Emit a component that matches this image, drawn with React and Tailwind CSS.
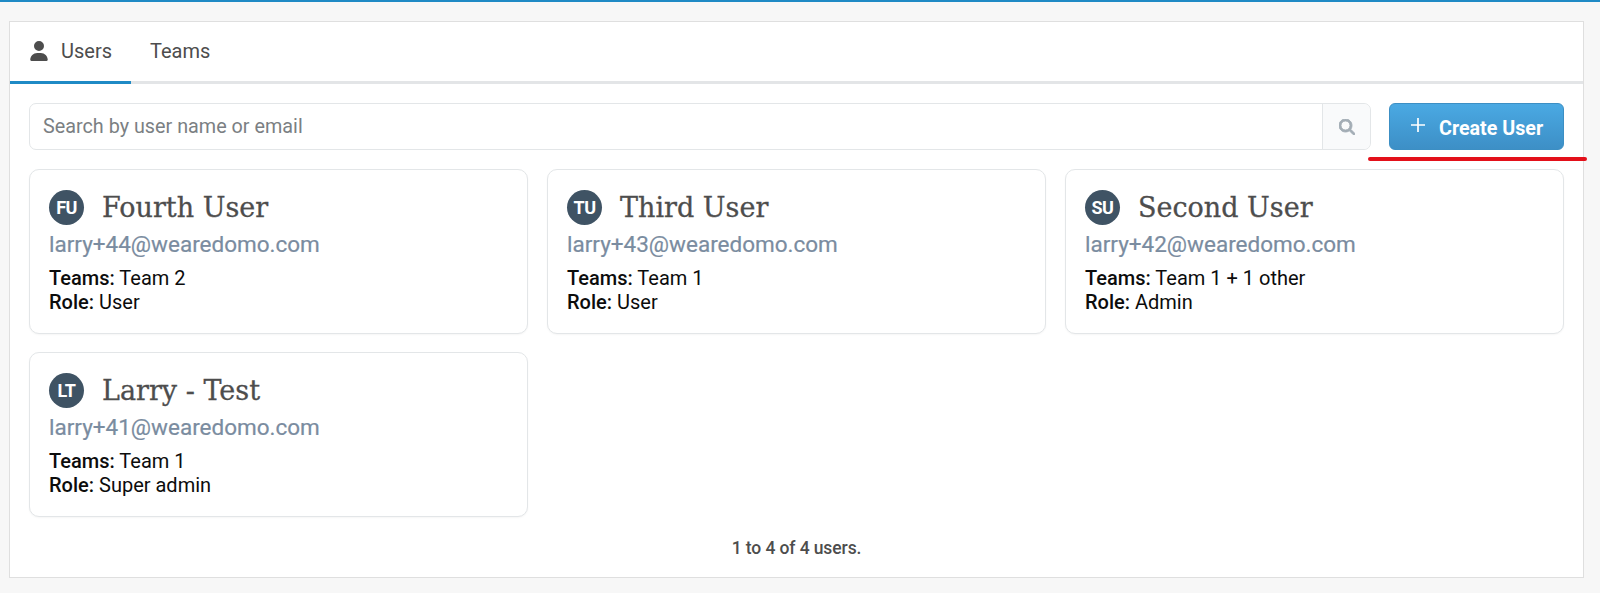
import React from "react";

const users = [
  { i: "FU", n: "Fourth User", e: "larry+44@wearedomo.com", t: "Team 2", r: "User" },
  { i: "TU", n: "Third User", e: "larry+43@wearedomo.com", t: "Team 1", r: "User" },
  { i: "SU", n: "Second User", e: "larry+42@wearedomo.com", t: "Team 1 + 1 other", r: "Admin" },
  { i: "LT", n: "Larry - Test", e: "larry+41@wearedomo.com", t: "Team 1", r: "Super admin" },
];

function Card({ u }) {
  return (
    <div className="h-[165px] rounded-[10px] border border-[#e3e6e8] bg-white pl-[19px] pt-[19px] shadow-[0_1px_2px_rgba(0,0,0,0.04)]">
      <div className="flex h-[36px] items-center">
        <div className="flex h-[35px] w-[35px] items-center justify-center rounded-full bg-[#3f5364] text-[18px] font-bold tracking-[-0.5px] text-white">{u.i}</div>
        <div className="ml-[18px] pt-[2px] text-[27px] leading-[36px] text-[#4d4d4d] [font-family:'DejaVu_Serif',serif] [-webkit-text-stroke:0.3px_#4d4d4d]">{u.n}</div>
      </div>
      <div className="mt-[5px] text-[22.5px] leading-[28px] text-[#7a8ca0] [-webkit-text-stroke:0.2px_#7a8ca0]">{u.e}</div>
      <div className="mt-[9px] text-[20px] leading-[23.5px] text-[#0c0c0c]"><span className="font-medium">Teams:</span> {u.t}</div>
      <div className="text-[20px] leading-[23.5px] text-[#0c0c0c]"><span className="font-medium">Role:</span> {u.r}</div>
    </div>
  );
}

export default function App() {
  return (
    <div className="h-[593px] overflow-hidden border-t-2 border-[#1f8ac5] bg-[#f7f7f7] pl-[9px] pt-[19px] [font-family:Roboto,sans-serif]">
      <div className="relative h-[557px] w-[1575px] border border-[#dfdfdf] bg-white">
        <div className="flex h-[62px] border-b-[3px] border-[#e3e5e7] text-[20px] text-[#4d4d4d]">
          <div className="-mb-[3px] flex h-[62px] w-[121px] items-center border-b-[3px] border-[#1f8ac5] pb-[2px] pl-[20px]">
            <svg viewBox="0 0 448 512" className="h-[20px] w-[18px] fill-[#4d4d4d]"><path d="M224 256A128 128 0 1 0 224 0a128 128 0 1 0 0 256zm-45.7 48C79.8 304 0 383.8 0 482.3 0 498.700 13.300 512 29.700 512h388.600c16.400 0 29.700-13.300 29.700-29.700C448 383.800 368.200 304 269.700 304H178.300z" /></svg>
            <span className="ml-[13px]">Users</span>
          </div>
          <div className="ml-[19px] flex items-center pb-[2px]">Teams</div>
        </div>
        <div className="pl-[19px] pr-[19px] pt-[19px]">
          <div className="flex gap-[18px]">
            <div className="flex h-[47px] w-[1342px] items-center rounded-[7px] border border-[#e3e6e8]">
              <div className="flex-1 pl-[13px] text-[19.8px] text-[#7b7f83]">Search by user name or email</div>
              <div className="flex h-full w-[48px] items-center justify-center rounded-r-[7px] border-l border-[#e3e6e8] bg-[#f9fafb]">
                <svg viewBox="0 0 512 512" className="h-[16px] w-[16px] fill-[#a3adb5]"><path d="M416 208c0 45.900-14.900 88.300-40 122.700L502.600 457.400c12.500 12.500 12.500 32.800 0 45.300s-32.800 12.500-45.300 0L330.700 376c-34.400 25.200-76.800 40-122.700 40C93.100 416 0 322.900 0 208S93.100 0 208 0S416 93.100 416 208zM208 352a144 144 0 1 0 0-288 144 144 0 1 0 0 288z" strokeWidth="30" stroke="#a3adb5" /></svg>
              </div>
            </div>
            <div className="flex h-[47px] w-[175px] items-center rounded-[6px] border border-[#3c8fc4] bg-gradient-to-b from-[#4aa9e3] to-[#3d8fc6] pl-[20px] text-[19.7px] font-bold text-white">
              <svg viewBox="0 0 16 16" className="-mt-[4px] h-[16px] w-[16px] stroke-white" strokeWidth="1.7"><path d="M8 1v14M1 8h14" /></svg>
              <span className="ml-[13px] pt-[4px]">Create User</span>
            </div>
          </div>
          <div className="mt-[19px] grid grid-cols-3 gap-x-[19px] gap-y-[18px]">
            {users.map((u) => <Card key={u.i} u={u} />)}
          </div>
          <div className="mt-[19px] text-center text-[17.5px] font-medium leading-[24px] tracking-[-0.1px] text-[#4d4d4d]">1 to 4 of 4 users.</div>
        </div>
        <div className="absolute left-[1358px] top-[135px] h-[4px] w-[219px] rounded-full bg-[#e3101a]" />
      </div>
    </div>
  );
}
